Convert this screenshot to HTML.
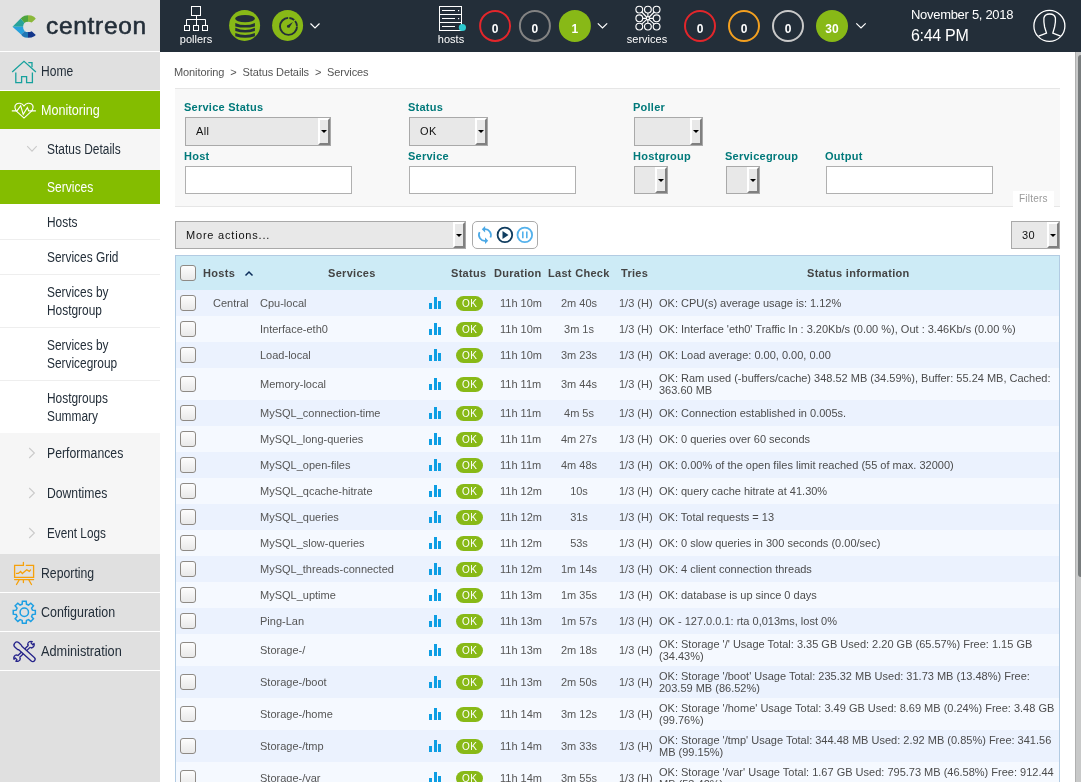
<!DOCTYPE html>
<html><head><meta charset="utf-8">
<style>
*{margin:0;padding:0;box-sizing:border-box}
html,body{width:1081px;height:782px;overflow:hidden;background:#fff;font-family:"Liberation Sans",sans-serif;-webkit-font-smoothing:antialiased}
.a{position:absolute;white-space:nowrap}
svg{position:absolute;overflow:visible}
#top{position:absolute;left:0;top:0;width:1081px;height:52px;background:#232e39}
#logo{position:absolute;left:0;top:0;width:160px;height:51px;background:#e1e1e1}
#side{position:absolute;left:0;top:51px;width:160px;height:731px;background:#e0e0e0}
.mi{position:absolute;left:0;width:160px;height:38px;background:#e0e0e0}
.mi .t{position:absolute;left:41px;top:0;line-height:38px;font-size:14px;color:#232e39}
.sb{position:absolute;left:0;width:160px;background:#f6f6f6}
.sb .t{position:absolute;left:47px;top:0;font-size:14px;color:#232e39}
.lf{position:absolute;left:0;width:160px;background:#fff}
.lf .t{position:absolute;left:47px;font-size:14px;color:#232e39;line-height:18px}
.hb{position:absolute;left:0;width:160px;height:1px;background:#eeeeee}
.chev{position:absolute;left:27px;width:7px;height:7px;border-right:1px solid #c4c4c4;border-bottom:1px solid #c4c4c4}
.lbl{position:absolute;font-size:11px;font-weight:bold;color:#00797a;letter-spacing:0.25px;white-space:nowrap}
.sel{position:absolute;background:#e8e8e8;border:1px solid #a9a9a9;font-size:11px;color:#111}
.sel .ar{position:absolute;right:0;top:0;bottom:0;width:12px;background:#e8e8e8;border-left:2px solid #fff;border-top:2px solid #fff;border-right:2px solid #808080;border-bottom:2px solid #808080}
.sel .ar:after{content:"";position:absolute;left:1px;top:50%;margin-top:-1.5px;border-left:3px solid transparent;border-right:3px solid transparent;border-top:3.5px solid #000}
.inp{position:absolute;background:#fff;border:1px solid #b0b0b0;height:28px}
.row{position:absolute;left:176px;width:883px}
.row .c{position:absolute;font-size:11px;color:#444;white-space:nowrap}
.cb{position:absolute;left:4px;width:16px;height:16px;border:1px solid #8e8a85;border-radius:3px;background:linear-gradient(#fdfdfd,#e9e9e9)}
.ok{position:absolute;left:280px;width:28px;height:15px;border-radius:8px;background:#88b917;color:#fff;font-size:10px;line-height:15px;text-align:center;letter-spacing:0.3px}
.ch{position:absolute;left:253px;width:13px;height:13px}
.ch i{position:absolute;bottom:0;width:3px;background:#0b9cde}
.hd{position:absolute;font-size:11px;font-weight:bold;color:#444;letter-spacing:0.3px;white-space:nowrap}
</style></head><body><div style="position:absolute;left:0;top:0;width:1081px;height:782px;overflow:hidden;will-change:transform">
<div id="top"></div><div id="logo"></div>
<svg style="left:0;top:0" width="50" height="51" viewBox="0 0 50 51">
<path d="M28 15.3 L31.2 15.6 L34 16.8 L35.8 18.8 L31.7 22.5 L30 21.9 L28 21.7 Z" fill="#8bb83a"/>
<path d="M28 15.3 L24.5 15.8 L22.3 16.9 L20.6 18.6 L24.4 23.1 L26 22.1 L28 21.7 Z" fill="#4ea53d"/>
<path d="M20.6 18.6 L12.5 26.8 L23.1 26.8 L23.4 24.8 L24.4 23.1 Z" fill="#27a39a"/>
<path d="M12.5 26.8 L21.1 34.5 L24.8 31.3 L23.4 29 L23.1 26.8 Z" fill="#27a1dc"/>
<path d="M21.1 34.5 L22.5 36.2 L25 37.4 L28 37.8 L28 32.1 L26.2 31.9 L24.8 31.3 Z" fill="#1f77b5"/>
<path d="M28 37.8 L31.5 37.4 L34.3 36.2 L35.8 35 L31.7 31.3 L30 31.9 L28 32.1 Z" fill="#13368b"/>
</svg>
<div class="a" style="left:46px;top:11.5px;font-size:23.5px;line-height:28px;color:#232e39;-webkit-text-stroke:0.55px #232e39;letter-spacing:0.7px;transform:scaleX(1.04);transform-origin:0 50%">centreon</div>
<svg style="left:0;top:0" width="230" height="52" viewBox="0 0 230 52" fill="none" stroke="#fff" stroke-width="1">
<rect x="191.5" y="6.5" width="9" height="9"/>
<path d="M196.5 15.5 V25 M186.5 25 V19.5 H205.5 V25"/>
<rect x="184.5" y="25.5" width="5" height="5"/><rect x="193.5" y="25.5" width="5" height="5"/><rect x="202.5" y="25.5" width="5" height="5"/>
</svg>
<div class="a" style="left:166px;width:60px;text-align:center;top:32.5px;font-size:11px;line-height:13px;color:#fff">pollers</div>
<svg style="left:0;top:0" width="320" height="52" viewBox="0 0 320 52">
<circle cx="244.6" cy="25.4" r="15.5" fill="#88b917"/>
<ellipse cx="245.05" cy="18.6" rx="9.9" ry="3.7" fill="#232e39"/>
<path d="M235.3 22.9 Q245.1 27.3 254.9 22.9 L254.9 26.4 Q245.1 28.8 235.3 26.4 Z" fill="#232e39"/>
<path d="M235.3 27.8 Q245.1 32.2 254.9 27.8 L254.9 30.9 Q245.1 34.1 235.3 30.9 Z" fill="#232e39"/>
<path d="M235.3 33 Q245.1 37.0 254.9 33 L254.9 36.2 Q245.1 39.4 235.3 36.2 Z" fill="#232e39"/>
<circle cx="287.6" cy="25.4" r="15.5" fill="#88b917"/>
<circle cx="288.5" cy="26.4" r="8.5" fill="none" stroke="#232e39" stroke-width="1.9" stroke-dasharray="39.41 1.3 5.24 1.3 5.2 1.3"/>
<path d="M292.9 22 L289.4 27.4 L287.4 25.4 Z" fill="#232e39"/><circle cx="288.4" cy="26.4" r="1.45" fill="#232e39"/>
<path d="M310.5 23.5 L315 28 L319.5 23.5" fill="none" stroke="#fff" stroke-width="1.2"/>
</svg>
<svg style="left:0;top:0" width="620" height="52" viewBox="0 0 620 52" fill="none" stroke="#fff" stroke-width="1">
<rect x="439.5" y="6.5" width="22" height="24"/>
<path d="M439.5 14.5 H461.5 M439.5 22.5 H461.5"/>
<path d="M442 10.5 H455 M442 18.5 H455 M442 26.5 H455" stroke-width="1.2"/>
<rect x="458" y="10" width="1.2" height="1.2" fill="#fff" stroke="none"/><rect x="458" y="18" width="1.2" height="1.2" fill="#fff" stroke="none"/>
<circle cx="462.4" cy="27.5" r="3.6" fill="#2ccad0" stroke="none"/>
<circle cx="495.1" cy="25.9" r="15" stroke="#e3262b" stroke-width="2"/>
<circle cx="534.9" cy="25.9" r="15" stroke="#838383" stroke-width="2"/>
<circle cx="574.9" cy="25.9" r="16" fill="#88b917" stroke="none"/>
<path d="M597.8 23.3 L602.5 28 L607.2 23.3" stroke-width="1.2"/>
</svg>
<div class="a" style="left:421px;width:60px;text-align:center;top:32.5px;font-size:11px;line-height:13px;color:#fff">hosts</div>
<div class="a" style="left:475.1px;width:40px;text-align:center;top:21.5px;font-size:12px;line-height:14px;font-weight:bold;color:#fff">0</div>
<div class="a" style="left:514.9px;width:40px;text-align:center;top:21.5px;font-size:12px;line-height:14px;font-weight:bold;color:#fff">0</div>
<div class="a" style="left:554.9px;width:40px;text-align:center;top:21.5px;font-size:12px;line-height:14px;font-weight:bold;color:#fff">1</div>
<svg style="left:0;top:0" width="880" height="52" viewBox="0 0 880 52" fill="none" stroke="#fff" stroke-width="1.15"><circle cx="639.3" cy="9.6" r="3.4"/><circle cx="639.3" cy="18.3" r="3.4"/><circle cx="639.3" cy="26.6" r="3.4"/><circle cx="647.9" cy="9.6" r="3.4"/><circle cx="647.9" cy="26.6" r="3.4"/><circle cx="656.6" cy="9.6" r="3.4"/><circle cx="656.6" cy="18.3" r="3.4"/><circle cx="656.6" cy="26.6" r="3.4"/>
<circle cx="647.9" cy="18.3" r="1.6"/>
<path d="M641.7 12 L646.6 17 M654.2 12 L649.2 17 M641.7 24.2 L646.6 19.6 M654.2 24.2 L649.2 19.6 M647.9 13 V16.7 M647.9 19.9 V23.2 M642.7 18.3 H646.3 M649.5 18.3 H653.2"/>
<circle cx="700" cy="26" r="15" stroke="#e3262b" stroke-width="2"/>
<circle cx="744" cy="26" r="15" stroke="#f3a020" stroke-width="2"/>
<circle cx="788" cy="26" r="15" stroke="#c9c9c9" stroke-width="2"/>
<circle cx="832" cy="26" r="16" fill="#88b917" stroke="none"/>
<path d="M856.3 23.3 L861 28 L865.7 23.3" stroke-width="1.2"/>
</svg>
<div class="a" style="left:617px;width:60px;text-align:center;top:32.5px;font-size:11px;line-height:13px;color:#fff">services</div>
<div class="a" style="left:680px;width:40px;text-align:center;top:21.5px;font-size:12px;line-height:14px;font-weight:bold;color:#fff">0</div>
<div class="a" style="left:724px;width:40px;text-align:center;top:21.5px;font-size:12px;line-height:14px;font-weight:bold;color:#fff">0</div>
<div class="a" style="left:768px;width:40px;text-align:center;top:21.5px;font-size:12px;line-height:14px;font-weight:bold;color:#fff">0</div>
<div class="a" style="left:812px;width:40px;text-align:center;top:21.5px;font-size:12px;line-height:14px;font-weight:bold;color:#fff">30</div>
<div class="a" style="left:911px;top:7px;font-size:13px;line-height:16px;color:#fff;letter-spacing:-0.3px">November 5, 2018</div>
<div class="a" style="left:911px;top:26px;font-size:16px;line-height:19px;color:#fff;letter-spacing:-0.3px">6:44 PM</div>
<svg style="left:0;top:0" width="1081" height="52" viewBox="0 0 1081 52" fill="none" stroke="#fff" stroke-width="1.3">
<circle cx="1049.4" cy="25.9" r="15.5"/>
<path d="M1038.6 36.2 L1046.5 33 L1044.6 27 Q1043.6 22 1043.9 18 Q1044.8 14 1049.6 14 Q1054.6 14 1055.4 18 Q1055.8 22 1054.6 27 L1052.8 33 L1060.6 36.2"/>
</svg>
<div id="side"></div>
<div style="position:absolute;left:0;top:51px;width:160px;height:1px;background:#fff"></div>
<div class="mi" style="top:52px;height:38px;background:#e0e0e0"><div class="t" style="color:#232e39;line-height:38px"><span style="display:inline-block;transform:scaleX(0.86);transform-origin:0 50%;white-space:nowrap">Home</span></div></div>
<div style="position:absolute;left:0;top:90px;width:160px;height:1px;background:#fff"></div>
<div class="mi" style="top:91px;height:38px;background:#84bd00"><div class="t" style="color:#fff;line-height:38px"><span style="display:inline-block;transform:scaleX(0.9);transform-origin:0 50%;white-space:nowrap">Monitoring</span></div></div>
<div class="sb" style="top:129px;height:41px"><div class="t" style="line-height:41px"><span style="display:inline-block;transform:scaleX(0.853);transform-origin:0 50%;white-space:nowrap">Status Details</span></div></div>
<svg style="left:0;top:0" width="40" height="160" viewBox="0 0 40 160"><path d="M27.2 146.2 L32 151.2 L36.7 146.2" fill="none" stroke="#cacaca" stroke-width="1.1"/></svg>
<div class="lf" style="top:170px;height:34px;background:#84bd00"><div class="t" style="line-height:34px;color:#fff"><span style="display:inline-block;transform:scaleX(0.86);transform-origin:0 50%;white-space:nowrap">Services</span></div></div>
<div class="lf" style="top:204px;height:35px"><div class="t" style="top:8.5px"><span style="display:inline-block;transform:scaleX(0.85);transform-origin:0 50%;white-space:nowrap">Hosts</span></div></div>
<div class="hb" style="top:239px"></div>
<div class="lf" style="top:240px;height:34px"><div class="t" style="top:8.0px"><span style="display:inline-block;transform:scaleX(0.85);transform-origin:0 50%;white-space:nowrap">Services Grid</span></div></div>
<div class="hb" style="top:274px"></div>
<div class="lf" style="top:275px;height:52px"><div class="t" style="top:8.0px"><span style="display:inline-block;transform:scaleX(0.85);transform-origin:0 50%;white-space:nowrap">Services by</span><br><span style="display:inline-block;transform:scaleX(0.85);transform-origin:0 50%;white-space:nowrap">Hostgroup</span></div></div>
<div class="hb" style="top:327px"></div>
<div class="lf" style="top:328px;height:52px"><div class="t" style="top:8.0px"><span style="display:inline-block;transform:scaleX(0.85);transform-origin:0 50%;white-space:nowrap">Services by</span><br><span style="display:inline-block;transform:scaleX(0.85);transform-origin:0 50%;white-space:nowrap">Servicegroup</span></div></div>
<div class="hb" style="top:380px"></div>
<div class="lf" style="top:381px;height:52px"><div class="t" style="top:8.0px"><span style="display:inline-block;transform:scaleX(0.85);transform-origin:0 50%;white-space:nowrap">Hostgroups</span><br><span style="display:inline-block;transform:scaleX(0.85);transform-origin:0 50%;white-space:nowrap">Summary</span></div></div>
<div class="hb" style="top:433px"></div>
<div class="sb" style="top:433px;height:121px"></div>
<div class="sb" style="top:433px;height:40px"><div class="t" style="line-height:40px"><span style="display:inline-block;transform:scaleX(0.875);transform-origin:0 50%;white-space:nowrap">Performances</span></div></div>
<svg style="left:0;top:433px" width="40" height="40" viewBox="0 0 40 40"><path d="M29.2 15 L34.4 20 L29.2 25" fill="none" stroke="#cacaca" stroke-width="1.1"/></svg>
<div class="sb" style="top:473px;height:40px"><div class="t" style="line-height:40px"><span style="display:inline-block;transform:scaleX(0.87);transform-origin:0 50%;white-space:nowrap">Downtimes</span></div></div>
<svg style="left:0;top:473px" width="40" height="40" viewBox="0 0 40 40"><path d="M29.2 15 L34.4 20 L29.2 25" fill="none" stroke="#cacaca" stroke-width="1.1"/></svg>
<div class="sb" style="top:513px;height:40px"><div class="t" style="line-height:40px"><span style="display:inline-block;transform:scaleX(0.84);transform-origin:0 50%;white-space:nowrap">Event Logs</span></div></div>
<svg style="left:0;top:513px" width="40" height="40" viewBox="0 0 40 40"><path d="M29.2 15 L34.4 20 L29.2 25" fill="none" stroke="#cacaca" stroke-width="1.1"/></svg>
<div class="mi" style="top:554px;height:38px;background:#e0e0e0"><div class="t" style="color:#232e39;line-height:38px"><span style="display:inline-block;transform:scaleX(0.876);transform-origin:0 50%;white-space:nowrap">Reporting</span></div></div>
<div style="position:absolute;left:0;top:592px;width:160px;height:1px;background:#fff"></div>
<div class="mi" style="top:593px;height:38px;background:#e0e0e0"><div class="t" style="color:#232e39;line-height:38px"><span style="display:inline-block;transform:scaleX(0.89);transform-origin:0 50%;white-space:nowrap">Configuration</span></div></div>
<div style="position:absolute;left:0;top:631px;width:160px;height:1px;background:#fff"></div>
<div class="mi" style="top:632px;height:38px;background:#e0e0e0"><div class="t" style="color:#232e39;line-height:38px"><span style="display:inline-block;transform:scaleX(0.91);transform-origin:0 50%;white-space:nowrap">Administration</span></div></div>
<div style="position:absolute;left:0;top:670px;width:160px;height:1px;background:#fff"></div>
<svg style="left:0;top:0" width="160" height="782" viewBox="0 0 160 782" fill="none">
<g stroke="#17a19d" stroke-width="1.3" fill="none">
<path d="M12.2 72 L24 61.3 L35.9 72"/>
<path d="M15.8 72.5 V82.6 H21.6 V76.6 H26.6 V82.6 H32.4 V72.5"/>
<path d="M28.3 62.6 H32 V67.2"/>
</g>
<g stroke="#fff" stroke-width="1.1" fill="none">
<path d="M11.8 110.9 H17 L20.7 105.8 L23.2 114.3 L27.4 107.5 L28.7 110.9 H35.9"/>
<path d="M16.2 110.9 Q14.2 107.5 15.3 105.3 Q16.8 102.8 20 103.3 Q22.6 103.8 24 106 Q25.4 103.8 28 103.3 Q31.2 102.8 32.7 105.3 Q33.8 107.5 31.8 110.9 L24 118.1 Z"/>
</g>
<g stroke="#f6a10b" stroke-width="1.3" stroke-linecap="round">
<path d="M23.4 562.3 V565.3 H14.6 V577.3 H33.6 V565.3 H26.3"/>
<path d="M14.6 579.6 H33.6 M19.1 580.1 L16.5 584.5 M23.4 580.3 V582.5 M28.9 580.1 L31.5 584.5"/>
<path d="M16.5 573.4 H18.4 L20.6 571.4 L22.3 573.6 L26.7 569.7 L29.3 571.4 L30.6 569.9"/>
</g>
<g stroke="#1c9fe3" stroke-width="1.5">
<circle cx="24.3" cy="612.3" r="4.2"/>
<path d="M22.14 604.18 L22.41 601.26 L26.19 601.26 L26.46 604.18 L28.51 605.03 L30.77 603.15 L33.45 605.83 L31.57 608.09 L32.42 610.14 L35.34 610.41 L35.34 614.19 L32.42 614.46 L31.57 616.51 L33.45 618.77 L30.77 621.45 L28.51 619.57 L26.46 620.42 L26.19 623.34 L22.41 623.34 L22.14 620.42 L20.09 619.57 L17.83 621.45 L15.15 618.77 L17.03 616.51 L16.18 614.46 L13.26 614.19 L13.26 610.41 L16.18 610.14 L17.03 608.09 L15.15 605.83 L17.83 603.15 L20.09 605.03 Z"/>
</g>
<g stroke="#25238a" stroke-width="1.3" fill="none" stroke-linejoin="round">
<g transform="translate(24 651.4) rotate(-44)">
<path d="M-7.5 -1.3 H7.5 M-7.5 1.3 H7.5"/>
<path d="M7.5 -1.3 L7.6 -2.6 A3.3 3.3 0 0 1 12.7 -1.3 L10.9 -1.3 L10.9 1.3 L12.7 1.3 A3.3 3.3 0 0 1 7.6 2.6 L7.5 1.3"/>
<path d="M-7.5 -1.3 L-7.6 -2.6 A3.3 3.3 0 0 0 -12.7 -1.3 L-10.9 -1.3 L-10.9 1.3 L-12.7 1.3 A3.3 3.3 0 0 0 -7.6 2.6 L-7.5 1.3"/>
</g>
<g transform="translate(24.6 651.9) rotate(42)">
<path d="M-10.3 -2.9 H-7.6 Q-6.3 -2.9 -5.8 -2.3 H11 A2.3 2.3 0 0 1 11 2.3 H-5.8 Q-6.3 2.9 -7.6 2.9 H-10.3 A2.9 2.9 0 0 1 -10.3 -2.9 Z" fill="#e0e0e0"/>
</g>
</g>
</svg>
<div class="a" style="left:174px;top:66px;font-size:11px;line-height:13px;color:#555;letter-spacing:-0.1px">Monitoring&nbsp;&nbsp;&gt;&nbsp;&nbsp;Status Details&nbsp;&nbsp;&gt;&nbsp;&nbsp;Services</div>
<div style="position:absolute;left:175px;top:88px;width:885px;height:119px;background:#f8f8f8;border-top:1px solid #e6e6e6;border-bottom:1px solid #e6e6e6"></div>
<div class="lbl" style="left:184px;top:101px;line-height:13px">Service Status</div>
<div class="sel" style="left:185px;top:117px;width:146px;height:29px"><div class="a" style="left:10px;top:0;line-height:27px"><span style="letter-spacing:0.4px">All</span></div><div class="ar"></div></div>
<div class="lbl" style="left:184px;top:150px;line-height:13px">Host</div>
<div class="inp" style="left:185px;top:166px;width:167px"></div>
<div class="lbl" style="left:408px;top:101px;line-height:13px">Status</div>
<div class="sel" style="left:409px;top:117px;width:79px;height:29px"><div class="a" style="left:10px;top:0;line-height:27px"><span style="letter-spacing:0.5px">OK</span></div><div class="ar"></div></div>
<div class="lbl" style="left:408px;top:150px;line-height:13px">Service</div>
<div class="inp" style="left:409px;top:166px;width:167px"></div>
<div class="lbl" style="left:633px;top:101px;line-height:13px">Poller</div>
<div class="sel" style="left:634px;top:117px;width:69px;height:29px"><div class="a" style="left:10px;top:0;line-height:27px"></div><div class="ar"></div></div>
<div class="lbl" style="left:633px;top:150px;line-height:13px">Hostgroup</div>
<div class="sel" style="left:634px;top:166px;width:34px;height:28px"><div class="a" style="left:10px;top:0;line-height:26px"></div><div class="ar"></div></div>
<div class="lbl" style="left:725px;top:150px;line-height:13px">Servicegroup</div>
<div class="sel" style="left:726px;top:166px;width:34px;height:28px"><div class="a" style="left:10px;top:0;line-height:26px"></div><div class="ar"></div></div>
<div class="lbl" style="left:825px;top:150px;line-height:13px">Output</div>
<div class="inp" style="left:826px;top:166px;width:167px"></div>
<div style="position:absolute;left:1013px;top:191px;width:41px;height:16px;background:#fff"></div>
<div class="a" style="left:1019px;top:192px;font-size:10px;line-height:13px;color:#9a9a9a;letter-spacing:0.2px">Filters</div>
<div class="sel" style="left:175px;top:221px;width:291px;height:28px"><div class="a" style="left:10px;top:0;line-height:26px"><span style="font-size:11px;letter-spacing:0.8px">More actions...</span></div><div class="ar"></div></div>
<div style="position:absolute;left:472px;top:221px;width:66px;height:28px;border:1px solid #aaa;border-radius:5px;background:#fff"></div>
<svg style="left:0;top:0" width="560" height="260" viewBox="0 0 560 260" fill="none">
<g stroke="#4aa8e6" stroke-width="1.7" fill="none">
<path d="M484.6 229.2 A5.9 5.9 0 0 1 490.4 237.5"/>
<path d="M479.6 232.2 A5.9 5.9 0 0 0 485.6 240.8"/>
</g>
<path d="M481.8 229.2 L485.1 225.9 L485.1 232.5 Z" fill="#4aa8e6"/>
<path d="M488.2 240.8 L485 237.6 L485 244 Z" fill="#4aa8e6"/>
<circle cx="504.9" cy="234.9" r="7.3" stroke="#0f3c5f" stroke-width="1.8"/>
<path d="M502.5 231 L508.5 235 L502.5 239 Z" fill="#0f3c5f"/>
<circle cx="524.8" cy="234.9" r="7.3" stroke="#53b1ec" stroke-width="1.8"/>
<path d="M522.8 231.5 V238.3 M526.8 231.5 V238.3" stroke="#53b1ec" stroke-width="1.6"/>
</svg>
<div class="sel" style="left:1011px;top:221px;width:49px;height:28px"><div class="a" style="left:10px;top:0;line-height:26px"><span style="font-size:11px;letter-spacing:0.5px">30</span></div><div class="ar"></div></div>
<div style="position:absolute;left:175px;top:255px;width:885px;height:527px;border-left:1px solid #b2cbe2;border-right:1px solid #b2cbe2;border-top:1px solid #b2cbe2"></div>
<div style="position:absolute;left:176px;top:256px;width:883px;height:34px;background:#cdebf6"></div>
<div class="cb" style="left:180px;top:265px"></div>
<div class="hd" style="left:203px;top:267px;line-height:13px">Hosts</div>
<svg style="left:0;top:0" width="260" height="290" viewBox="0 0 260 290" fill="none"><path d="M245.5 275.5 L249 272 L252.5 275.5" stroke="#0b2d5b" stroke-width="1.5"/></svg>
<div class="hd" style="left:328px;top:267px;line-height:13px">Services</div>
<div class="hd" style="left:451px;top:267px;line-height:13px">Status</div>
<div class="hd" style="left:494px;top:267px;line-height:13px">Duration</div>
<div class="hd" style="left:548px;top:267px;line-height:13px">Last Check</div>
<div class="hd" style="left:621px;top:267px;line-height:13px">Tries</div>
<div class="hd" style="left:807px;top:267px;line-height:13px">Status information</div>
<div style="position:absolute;left:176px;top:290px;width:883px;height:26px;background:#ebf2fe"></div>
<div class="cb" style="left:180px;top:295.0px"></div>
<div class="a" style="left:213px;top:296.0px;font-size:11px;line-height:14px;color:#555">Central</div>
<div class="a" style="left:260px;top:296.0px;font-size:11px;line-height:14px;color:#555">Cpu-local</div>
<div style="position:absolute;left:429px;top:297.0px;width:13px;height:12px"><i style="position:absolute;left:0;bottom:0;width:3px;height:6px;background:#0e9ee3"></i><i style="position:absolute;left:4.6px;bottom:0;width:3px;height:12px;background:#0e9ee3"></i><i style="position:absolute;left:9.2px;bottom:0;width:3px;height:8px;background:#0e9ee3"></i></div>
<div style="position:absolute;left:456px;top:295.5px;width:27px;height:15px;border-radius:8px;background:#88b917;color:#fff;font-size:10px;line-height:15.5px;text-align:center;letter-spacing:0.3px;text-indent:0.3px">OK</div>
<div class="a" style="left:500px;top:296.0px;font-size:11px;line-height:14px;color:#555">11h 10m</div>
<div class="a" style="left:546px;width:66px;text-align:center;top:296.0px;font-size:11px;line-height:14px;color:#555">2m 40s</div>
<div class="a" style="left:619px;top:296.0px;font-size:11px;line-height:14px;color:#555">1/3 (H)</div>
<div class="a" style="left:659px;top:296.0px;font-size:11px;line-height:14px;color:#4c4c4c">OK: CPU(s) average usage is: 1.12%</div>
<div style="position:absolute;left:176px;top:316px;width:883px;height:26px;background:#f5f9ff"></div>
<div class="cb" style="left:180px;top:321.0px"></div>
<div class="a" style="left:260px;top:322.0px;font-size:11px;line-height:14px;color:#555">Interface-eth0</div>
<div style="position:absolute;left:429px;top:323.0px;width:13px;height:12px"><i style="position:absolute;left:0;bottom:0;width:3px;height:6px;background:#0e9ee3"></i><i style="position:absolute;left:4.6px;bottom:0;width:3px;height:12px;background:#0e9ee3"></i><i style="position:absolute;left:9.2px;bottom:0;width:3px;height:8px;background:#0e9ee3"></i></div>
<div style="position:absolute;left:456px;top:321.5px;width:27px;height:15px;border-radius:8px;background:#88b917;color:#fff;font-size:10px;line-height:15.5px;text-align:center;letter-spacing:0.3px;text-indent:0.3px">OK</div>
<div class="a" style="left:500px;top:322.0px;font-size:11px;line-height:14px;color:#555">11h 10m</div>
<div class="a" style="left:546px;width:66px;text-align:center;top:322.0px;font-size:11px;line-height:14px;color:#555">3m 1s</div>
<div class="a" style="left:619px;top:322.0px;font-size:11px;line-height:14px;color:#555">1/3 (H)</div>
<div class="a" style="left:659px;top:322.0px;font-size:11px;line-height:14px;color:#4c4c4c">OK: Interface 'eth0' Traffic In : 3.20Kb/s (0.00 %), Out : 3.46Kb/s (0.00 %)</div>
<div style="position:absolute;left:176px;top:342px;width:883px;height:26px;background:#ebf2fe"></div>
<div class="cb" style="left:180px;top:347.0px"></div>
<div class="a" style="left:260px;top:348.0px;font-size:11px;line-height:14px;color:#555">Load-local</div>
<div style="position:absolute;left:429px;top:349.0px;width:13px;height:12px"><i style="position:absolute;left:0;bottom:0;width:3px;height:6px;background:#0e9ee3"></i><i style="position:absolute;left:4.6px;bottom:0;width:3px;height:12px;background:#0e9ee3"></i><i style="position:absolute;left:9.2px;bottom:0;width:3px;height:8px;background:#0e9ee3"></i></div>
<div style="position:absolute;left:456px;top:347.5px;width:27px;height:15px;border-radius:8px;background:#88b917;color:#fff;font-size:10px;line-height:15.5px;text-align:center;letter-spacing:0.3px;text-indent:0.3px">OK</div>
<div class="a" style="left:500px;top:348.0px;font-size:11px;line-height:14px;color:#555">11h 10m</div>
<div class="a" style="left:546px;width:66px;text-align:center;top:348.0px;font-size:11px;line-height:14px;color:#555">3m 23s</div>
<div class="a" style="left:619px;top:348.0px;font-size:11px;line-height:14px;color:#555">1/3 (H)</div>
<div class="a" style="left:659px;top:348.0px;font-size:11px;line-height:14px;color:#4c4c4c">OK: Load average: 0.00, 0.00, 0.00</div>
<div style="position:absolute;left:176px;top:368px;width:883px;height:32px;background:#f5f9ff"></div>
<div class="cb" style="left:180px;top:376.0px"></div>
<div class="a" style="left:260px;top:377.0px;font-size:11px;line-height:14px;color:#555">Memory-local</div>
<div style="position:absolute;left:429px;top:378.0px;width:13px;height:12px"><i style="position:absolute;left:0;bottom:0;width:3px;height:6px;background:#0e9ee3"></i><i style="position:absolute;left:4.6px;bottom:0;width:3px;height:12px;background:#0e9ee3"></i><i style="position:absolute;left:9.2px;bottom:0;width:3px;height:8px;background:#0e9ee3"></i></div>
<div style="position:absolute;left:456px;top:376.5px;width:27px;height:15px;border-radius:8px;background:#88b917;color:#fff;font-size:10px;line-height:15.5px;text-align:center;letter-spacing:0.3px;text-indent:0.3px">OK</div>
<div class="a" style="left:500px;top:377.0px;font-size:11px;line-height:14px;color:#555">11h 11m</div>
<div class="a" style="left:546px;width:66px;text-align:center;top:377.0px;font-size:11px;line-height:14px;color:#555">3m 44s</div>
<div class="a" style="left:619px;top:377.0px;font-size:11px;line-height:14px;color:#555">1/3 (H)</div>
<div class="a" style="left:659px;top:372.0px;font-size:11px;line-height:12px;color:#4c4c4c">OK: Ram used (-buffers/cache) 348.52 MB (34.59%), Buffer: 55.24 MB, Cached:<br>363.60 MB</div>
<div style="position:absolute;left:176px;top:400px;width:883px;height:26px;background:#ebf2fe"></div>
<div class="cb" style="left:180px;top:405.0px"></div>
<div class="a" style="left:260px;top:406.0px;font-size:11px;line-height:14px;color:#555">MySQL_connection-time</div>
<div style="position:absolute;left:429px;top:407.0px;width:13px;height:12px"><i style="position:absolute;left:0;bottom:0;width:3px;height:6px;background:#0e9ee3"></i><i style="position:absolute;left:4.6px;bottom:0;width:3px;height:12px;background:#0e9ee3"></i><i style="position:absolute;left:9.2px;bottom:0;width:3px;height:8px;background:#0e9ee3"></i></div>
<div style="position:absolute;left:456px;top:405.5px;width:27px;height:15px;border-radius:8px;background:#88b917;color:#fff;font-size:10px;line-height:15.5px;text-align:center;letter-spacing:0.3px;text-indent:0.3px">OK</div>
<div class="a" style="left:500px;top:406.0px;font-size:11px;line-height:14px;color:#555">11h 11m</div>
<div class="a" style="left:546px;width:66px;text-align:center;top:406.0px;font-size:11px;line-height:14px;color:#555">4m 5s</div>
<div class="a" style="left:619px;top:406.0px;font-size:11px;line-height:14px;color:#555">1/3 (H)</div>
<div class="a" style="left:659px;top:406.0px;font-size:11px;line-height:14px;color:#4c4c4c">OK: Connection established in 0.005s.</div>
<div style="position:absolute;left:176px;top:426px;width:883px;height:26px;background:#f5f9ff"></div>
<div class="cb" style="left:180px;top:431.0px"></div>
<div class="a" style="left:260px;top:432.0px;font-size:11px;line-height:14px;color:#555">MySQL_long-queries</div>
<div style="position:absolute;left:429px;top:433.0px;width:13px;height:12px"><i style="position:absolute;left:0;bottom:0;width:3px;height:6px;background:#0e9ee3"></i><i style="position:absolute;left:4.6px;bottom:0;width:3px;height:12px;background:#0e9ee3"></i><i style="position:absolute;left:9.2px;bottom:0;width:3px;height:8px;background:#0e9ee3"></i></div>
<div style="position:absolute;left:456px;top:431.5px;width:27px;height:15px;border-radius:8px;background:#88b917;color:#fff;font-size:10px;line-height:15.5px;text-align:center;letter-spacing:0.3px;text-indent:0.3px">OK</div>
<div class="a" style="left:500px;top:432.0px;font-size:11px;line-height:14px;color:#555">11h 11m</div>
<div class="a" style="left:546px;width:66px;text-align:center;top:432.0px;font-size:11px;line-height:14px;color:#555">4m 27s</div>
<div class="a" style="left:619px;top:432.0px;font-size:11px;line-height:14px;color:#555">1/3 (H)</div>
<div class="a" style="left:659px;top:432.0px;font-size:11px;line-height:14px;color:#4c4c4c">OK: 0 queries over 60 seconds</div>
<div style="position:absolute;left:176px;top:452px;width:883px;height:26px;background:#ebf2fe"></div>
<div class="cb" style="left:180px;top:457.0px"></div>
<div class="a" style="left:260px;top:458.0px;font-size:11px;line-height:14px;color:#555">MySQL_open-files</div>
<div style="position:absolute;left:429px;top:459.0px;width:13px;height:12px"><i style="position:absolute;left:0;bottom:0;width:3px;height:6px;background:#0e9ee3"></i><i style="position:absolute;left:4.6px;bottom:0;width:3px;height:12px;background:#0e9ee3"></i><i style="position:absolute;left:9.2px;bottom:0;width:3px;height:8px;background:#0e9ee3"></i></div>
<div style="position:absolute;left:456px;top:457.5px;width:27px;height:15px;border-radius:8px;background:#88b917;color:#fff;font-size:10px;line-height:15.5px;text-align:center;letter-spacing:0.3px;text-indent:0.3px">OK</div>
<div class="a" style="left:500px;top:458.0px;font-size:11px;line-height:14px;color:#555">11h 11m</div>
<div class="a" style="left:546px;width:66px;text-align:center;top:458.0px;font-size:11px;line-height:14px;color:#555">4m 48s</div>
<div class="a" style="left:619px;top:458.0px;font-size:11px;line-height:14px;color:#555">1/3 (H)</div>
<div class="a" style="left:659px;top:458.0px;font-size:11px;line-height:14px;color:#4c4c4c">OK: 0.00% of the open files limit reached (55 of max. 32000)</div>
<div style="position:absolute;left:176px;top:478px;width:883px;height:26px;background:#f5f9ff"></div>
<div class="cb" style="left:180px;top:483.0px"></div>
<div class="a" style="left:260px;top:484.0px;font-size:11px;line-height:14px;color:#555">MySQL_qcache-hitrate</div>
<div style="position:absolute;left:429px;top:485.0px;width:13px;height:12px"><i style="position:absolute;left:0;bottom:0;width:3px;height:6px;background:#0e9ee3"></i><i style="position:absolute;left:4.6px;bottom:0;width:3px;height:12px;background:#0e9ee3"></i><i style="position:absolute;left:9.2px;bottom:0;width:3px;height:8px;background:#0e9ee3"></i></div>
<div style="position:absolute;left:456px;top:483.5px;width:27px;height:15px;border-radius:8px;background:#88b917;color:#fff;font-size:10px;line-height:15.5px;text-align:center;letter-spacing:0.3px;text-indent:0.3px">OK</div>
<div class="a" style="left:500px;top:484.0px;font-size:11px;line-height:14px;color:#555">11h 12m</div>
<div class="a" style="left:546px;width:66px;text-align:center;top:484.0px;font-size:11px;line-height:14px;color:#555">10s</div>
<div class="a" style="left:619px;top:484.0px;font-size:11px;line-height:14px;color:#555">1/3 (H)</div>
<div class="a" style="left:659px;top:484.0px;font-size:11px;line-height:14px;color:#4c4c4c">OK: query cache hitrate at 41.30%</div>
<div style="position:absolute;left:176px;top:504px;width:883px;height:26px;background:#ebf2fe"></div>
<div class="cb" style="left:180px;top:509.0px"></div>
<div class="a" style="left:260px;top:510.0px;font-size:11px;line-height:14px;color:#555">MySQL_queries</div>
<div style="position:absolute;left:429px;top:511.0px;width:13px;height:12px"><i style="position:absolute;left:0;bottom:0;width:3px;height:6px;background:#0e9ee3"></i><i style="position:absolute;left:4.6px;bottom:0;width:3px;height:12px;background:#0e9ee3"></i><i style="position:absolute;left:9.2px;bottom:0;width:3px;height:8px;background:#0e9ee3"></i></div>
<div style="position:absolute;left:456px;top:509.5px;width:27px;height:15px;border-radius:8px;background:#88b917;color:#fff;font-size:10px;line-height:15.5px;text-align:center;letter-spacing:0.3px;text-indent:0.3px">OK</div>
<div class="a" style="left:500px;top:510.0px;font-size:11px;line-height:14px;color:#555">11h 12m</div>
<div class="a" style="left:546px;width:66px;text-align:center;top:510.0px;font-size:11px;line-height:14px;color:#555">31s</div>
<div class="a" style="left:619px;top:510.0px;font-size:11px;line-height:14px;color:#555">1/3 (H)</div>
<div class="a" style="left:659px;top:510.0px;font-size:11px;line-height:14px;color:#4c4c4c">OK: Total requests = 13</div>
<div style="position:absolute;left:176px;top:530px;width:883px;height:26px;background:#f5f9ff"></div>
<div class="cb" style="left:180px;top:535.0px"></div>
<div class="a" style="left:260px;top:536.0px;font-size:11px;line-height:14px;color:#555">MySQL_slow-queries</div>
<div style="position:absolute;left:429px;top:537.0px;width:13px;height:12px"><i style="position:absolute;left:0;bottom:0;width:3px;height:6px;background:#0e9ee3"></i><i style="position:absolute;left:4.6px;bottom:0;width:3px;height:12px;background:#0e9ee3"></i><i style="position:absolute;left:9.2px;bottom:0;width:3px;height:8px;background:#0e9ee3"></i></div>
<div style="position:absolute;left:456px;top:535.5px;width:27px;height:15px;border-radius:8px;background:#88b917;color:#fff;font-size:10px;line-height:15.5px;text-align:center;letter-spacing:0.3px;text-indent:0.3px">OK</div>
<div class="a" style="left:500px;top:536.0px;font-size:11px;line-height:14px;color:#555">11h 12m</div>
<div class="a" style="left:546px;width:66px;text-align:center;top:536.0px;font-size:11px;line-height:14px;color:#555">53s</div>
<div class="a" style="left:619px;top:536.0px;font-size:11px;line-height:14px;color:#555">1/3 (H)</div>
<div class="a" style="left:659px;top:536.0px;font-size:11px;line-height:14px;color:#4c4c4c">OK: 0 slow queries in 300 seconds (0.00/sec)</div>
<div style="position:absolute;left:176px;top:556px;width:883px;height:26px;background:#ebf2fe"></div>
<div class="cb" style="left:180px;top:561.0px"></div>
<div class="a" style="left:260px;top:562.0px;font-size:11px;line-height:14px;color:#555">MySQL_threads-connected</div>
<div style="position:absolute;left:429px;top:563.0px;width:13px;height:12px"><i style="position:absolute;left:0;bottom:0;width:3px;height:6px;background:#0e9ee3"></i><i style="position:absolute;left:4.6px;bottom:0;width:3px;height:12px;background:#0e9ee3"></i><i style="position:absolute;left:9.2px;bottom:0;width:3px;height:8px;background:#0e9ee3"></i></div>
<div style="position:absolute;left:456px;top:561.5px;width:27px;height:15px;border-radius:8px;background:#88b917;color:#fff;font-size:10px;line-height:15.5px;text-align:center;letter-spacing:0.3px;text-indent:0.3px">OK</div>
<div class="a" style="left:500px;top:562.0px;font-size:11px;line-height:14px;color:#555">11h 12m</div>
<div class="a" style="left:546px;width:66px;text-align:center;top:562.0px;font-size:11px;line-height:14px;color:#555">1m 14s</div>
<div class="a" style="left:619px;top:562.0px;font-size:11px;line-height:14px;color:#555">1/3 (H)</div>
<div class="a" style="left:659px;top:562.0px;font-size:11px;line-height:14px;color:#4c4c4c">OK: 4 client connection threads</div>
<div style="position:absolute;left:176px;top:582px;width:883px;height:26px;background:#f5f9ff"></div>
<div class="cb" style="left:180px;top:587.0px"></div>
<div class="a" style="left:260px;top:588.0px;font-size:11px;line-height:14px;color:#555">MySQL_uptime</div>
<div style="position:absolute;left:429px;top:589.0px;width:13px;height:12px"><i style="position:absolute;left:0;bottom:0;width:3px;height:6px;background:#0e9ee3"></i><i style="position:absolute;left:4.6px;bottom:0;width:3px;height:12px;background:#0e9ee3"></i><i style="position:absolute;left:9.2px;bottom:0;width:3px;height:8px;background:#0e9ee3"></i></div>
<div style="position:absolute;left:456px;top:587.5px;width:27px;height:15px;border-radius:8px;background:#88b917;color:#fff;font-size:10px;line-height:15.5px;text-align:center;letter-spacing:0.3px;text-indent:0.3px">OK</div>
<div class="a" style="left:500px;top:588.0px;font-size:11px;line-height:14px;color:#555">11h 13m</div>
<div class="a" style="left:546px;width:66px;text-align:center;top:588.0px;font-size:11px;line-height:14px;color:#555">1m 35s</div>
<div class="a" style="left:619px;top:588.0px;font-size:11px;line-height:14px;color:#555">1/3 (H)</div>
<div class="a" style="left:659px;top:588.0px;font-size:11px;line-height:14px;color:#4c4c4c">OK: database is up since 0 days</div>
<div style="position:absolute;left:176px;top:608px;width:883px;height:26px;background:#ebf2fe"></div>
<div class="cb" style="left:180px;top:613.0px"></div>
<div class="a" style="left:260px;top:614.0px;font-size:11px;line-height:14px;color:#555">Ping-Lan</div>
<div style="position:absolute;left:429px;top:615.0px;width:13px;height:12px"><i style="position:absolute;left:0;bottom:0;width:3px;height:6px;background:#0e9ee3"></i><i style="position:absolute;left:4.6px;bottom:0;width:3px;height:12px;background:#0e9ee3"></i><i style="position:absolute;left:9.2px;bottom:0;width:3px;height:8px;background:#0e9ee3"></i></div>
<div style="position:absolute;left:456px;top:613.5px;width:27px;height:15px;border-radius:8px;background:#88b917;color:#fff;font-size:10px;line-height:15.5px;text-align:center;letter-spacing:0.3px;text-indent:0.3px">OK</div>
<div class="a" style="left:500px;top:614.0px;font-size:11px;line-height:14px;color:#555">11h 13m</div>
<div class="a" style="left:546px;width:66px;text-align:center;top:614.0px;font-size:11px;line-height:14px;color:#555">1m 57s</div>
<div class="a" style="left:619px;top:614.0px;font-size:11px;line-height:14px;color:#555">1/3 (H)</div>
<div class="a" style="left:659px;top:614.0px;font-size:11px;line-height:14px;color:#4c4c4c">OK - 127.0.0.1: rta 0,013ms, lost 0%</div>
<div style="position:absolute;left:176px;top:634px;width:883px;height:32px;background:#f5f9ff"></div>
<div class="cb" style="left:180px;top:642.0px"></div>
<div class="a" style="left:260px;top:643.0px;font-size:11px;line-height:14px;color:#555">Storage-/</div>
<div style="position:absolute;left:429px;top:644.0px;width:13px;height:12px"><i style="position:absolute;left:0;bottom:0;width:3px;height:6px;background:#0e9ee3"></i><i style="position:absolute;left:4.6px;bottom:0;width:3px;height:12px;background:#0e9ee3"></i><i style="position:absolute;left:9.2px;bottom:0;width:3px;height:8px;background:#0e9ee3"></i></div>
<div style="position:absolute;left:456px;top:642.5px;width:27px;height:15px;border-radius:8px;background:#88b917;color:#fff;font-size:10px;line-height:15.5px;text-align:center;letter-spacing:0.3px;text-indent:0.3px">OK</div>
<div class="a" style="left:500px;top:643.0px;font-size:11px;line-height:14px;color:#555">11h 13m</div>
<div class="a" style="left:546px;width:66px;text-align:center;top:643.0px;font-size:11px;line-height:14px;color:#555">2m 18s</div>
<div class="a" style="left:619px;top:643.0px;font-size:11px;line-height:14px;color:#555">1/3 (H)</div>
<div class="a" style="left:659px;top:638.0px;font-size:11px;line-height:12px;color:#4c4c4c">OK: Storage '/' Usage Total: 3.35 GB Used: 2.20 GB (65.57%) Free: 1.15 GB<br>(34.43%)</div>
<div style="position:absolute;left:176px;top:666px;width:883px;height:32px;background:#ebf2fe"></div>
<div class="cb" style="left:180px;top:674.0px"></div>
<div class="a" style="left:260px;top:675.0px;font-size:11px;line-height:14px;color:#555">Storage-/boot</div>
<div style="position:absolute;left:429px;top:676.0px;width:13px;height:12px"><i style="position:absolute;left:0;bottom:0;width:3px;height:6px;background:#0e9ee3"></i><i style="position:absolute;left:4.6px;bottom:0;width:3px;height:12px;background:#0e9ee3"></i><i style="position:absolute;left:9.2px;bottom:0;width:3px;height:8px;background:#0e9ee3"></i></div>
<div style="position:absolute;left:456px;top:674.5px;width:27px;height:15px;border-radius:8px;background:#88b917;color:#fff;font-size:10px;line-height:15.5px;text-align:center;letter-spacing:0.3px;text-indent:0.3px">OK</div>
<div class="a" style="left:500px;top:675.0px;font-size:11px;line-height:14px;color:#555">11h 13m</div>
<div class="a" style="left:546px;width:66px;text-align:center;top:675.0px;font-size:11px;line-height:14px;color:#555">2m 50s</div>
<div class="a" style="left:619px;top:675.0px;font-size:11px;line-height:14px;color:#555">1/3 (H)</div>
<div class="a" style="left:659px;top:670.0px;font-size:11px;line-height:12px;color:#4c4c4c">OK: Storage '/boot' Usage Total: 235.32 MB Used: 31.73 MB (13.48%) Free:<br>203.59 MB (86.52%)</div>
<div style="position:absolute;left:176px;top:698px;width:883px;height:32px;background:#f5f9ff"></div>
<div class="cb" style="left:180px;top:706.0px"></div>
<div class="a" style="left:260px;top:707.0px;font-size:11px;line-height:14px;color:#555">Storage-/home</div>
<div style="position:absolute;left:429px;top:708.0px;width:13px;height:12px"><i style="position:absolute;left:0;bottom:0;width:3px;height:6px;background:#0e9ee3"></i><i style="position:absolute;left:4.6px;bottom:0;width:3px;height:12px;background:#0e9ee3"></i><i style="position:absolute;left:9.2px;bottom:0;width:3px;height:8px;background:#0e9ee3"></i></div>
<div style="position:absolute;left:456px;top:706.5px;width:27px;height:15px;border-radius:8px;background:#88b917;color:#fff;font-size:10px;line-height:15.5px;text-align:center;letter-spacing:0.3px;text-indent:0.3px">OK</div>
<div class="a" style="left:500px;top:707.0px;font-size:11px;line-height:14px;color:#555">11h 14m</div>
<div class="a" style="left:546px;width:66px;text-align:center;top:707.0px;font-size:11px;line-height:14px;color:#555">3m 12s</div>
<div class="a" style="left:619px;top:707.0px;font-size:11px;line-height:14px;color:#555">1/3 (H)</div>
<div class="a" style="left:659px;top:702.0px;font-size:11px;line-height:12px;color:#4c4c4c">OK: Storage '/home' Usage Total: 3.49 GB Used: 8.69 MB (0.24%) Free: 3.48 GB<br>(99.76%)</div>
<div style="position:absolute;left:176px;top:730px;width:883px;height:32px;background:#ebf2fe"></div>
<div class="cb" style="left:180px;top:738.0px"></div>
<div class="a" style="left:260px;top:739.0px;font-size:11px;line-height:14px;color:#555">Storage-/tmp</div>
<div style="position:absolute;left:429px;top:740.0px;width:13px;height:12px"><i style="position:absolute;left:0;bottom:0;width:3px;height:6px;background:#0e9ee3"></i><i style="position:absolute;left:4.6px;bottom:0;width:3px;height:12px;background:#0e9ee3"></i><i style="position:absolute;left:9.2px;bottom:0;width:3px;height:8px;background:#0e9ee3"></i></div>
<div style="position:absolute;left:456px;top:738.5px;width:27px;height:15px;border-radius:8px;background:#88b917;color:#fff;font-size:10px;line-height:15.5px;text-align:center;letter-spacing:0.3px;text-indent:0.3px">OK</div>
<div class="a" style="left:500px;top:739.0px;font-size:11px;line-height:14px;color:#555">11h 14m</div>
<div class="a" style="left:546px;width:66px;text-align:center;top:739.0px;font-size:11px;line-height:14px;color:#555">3m 33s</div>
<div class="a" style="left:619px;top:739.0px;font-size:11px;line-height:14px;color:#555">1/3 (H)</div>
<div class="a" style="left:659px;top:734.0px;font-size:11px;line-height:12px;color:#4c4c4c">OK: Storage '/tmp' Usage Total: 344.48 MB Used: 2.92 MB (0.85%) Free: 341.56<br>MB (99.15%)</div>
<div style="position:absolute;left:176px;top:762px;width:883px;height:32px;background:#f5f9ff"></div>
<div class="cb" style="left:180px;top:770.0px"></div>
<div class="a" style="left:260px;top:771.0px;font-size:11px;line-height:14px;color:#555">Storage-/var</div>
<div style="position:absolute;left:429px;top:772.0px;width:13px;height:12px"><i style="position:absolute;left:0;bottom:0;width:3px;height:6px;background:#0e9ee3"></i><i style="position:absolute;left:4.6px;bottom:0;width:3px;height:12px;background:#0e9ee3"></i><i style="position:absolute;left:9.2px;bottom:0;width:3px;height:8px;background:#0e9ee3"></i></div>
<div style="position:absolute;left:456px;top:770.5px;width:27px;height:15px;border-radius:8px;background:#88b917;color:#fff;font-size:10px;line-height:15.5px;text-align:center;letter-spacing:0.3px;text-indent:0.3px">OK</div>
<div class="a" style="left:500px;top:771.0px;font-size:11px;line-height:14px;color:#555">11h 14m</div>
<div class="a" style="left:546px;width:66px;text-align:center;top:771.0px;font-size:11px;line-height:14px;color:#555">3m 55s</div>
<div class="a" style="left:619px;top:771.0px;font-size:11px;line-height:14px;color:#555">1/3 (H)</div>
<div class="a" style="left:659px;top:766.0px;font-size:11px;line-height:12px;color:#4c4c4c">OK: Storage '/var' Usage Total: 1.67 GB Used: 795.73 MB (46.58%) Free: 912.44<br>MB (53.42%)</div>
<div style="position:absolute;left:1075px;top:52px;width:6px;height:730px;background:#c8c9c9;border-left:1px solid #b0b0b0"></div>
<div style="position:absolute;left:1078px;top:55px;width:3px;height:522px;background:#787c7d;border-radius:3px 0 0 3px"></div>
</div></body></html>
